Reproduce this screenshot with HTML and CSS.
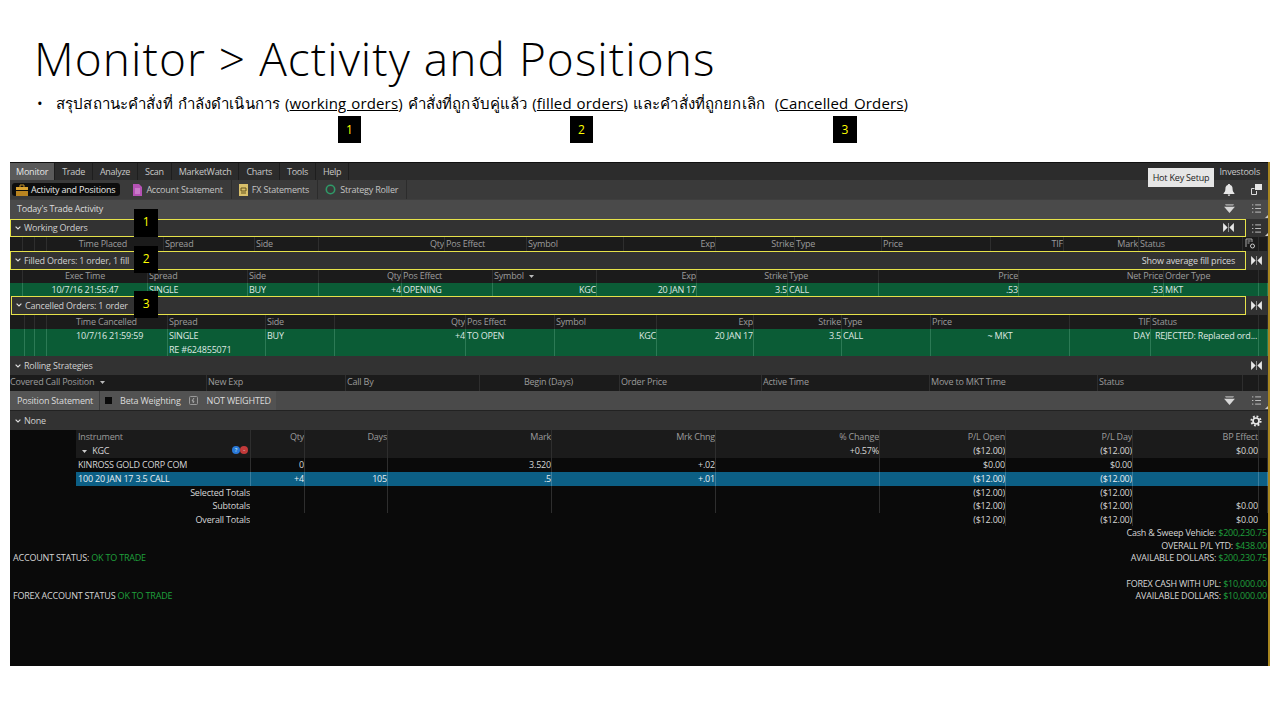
FILE: index.html
```html
<!DOCTYPE html>
<html lang="en">
<head>
    <meta charset="UTF-8">
    <title>Monitor - Activity and Positions</title>
    <link rel="stylesheet" href="styles.css">
</head>
<body>
    <svg class="defs" width="0" height="0">
        <symbol id="i-list" viewBox="0 0 12 10"><path d="M1 1h1.500M4.500 1H11M1 5h1.500M4.500 5H11M1 9h1.500M4.500 9H11" stroke="#bdbdbd" stroke-width="1.100" fill="none"/></symbol>
        <symbol id="i-bow" viewBox="0 0 12 10"><path d="M0 0l5 5-5 5zM12 0L7 5l5 5z" fill="#e8e8e8"/><path d="M6 0v10" stroke="#bbb" stroke-width=".8"/></symbol>
        <symbol id="i-tri" viewBox="0 0 12 10"><path d="M0 3l6 7 6-7z" fill="#d8d8d8"/><path d="M1 0h10l-1 2H2z" fill="#999"/></symbol>
        <symbol id="i-chev" viewBox="0 0 6 4"><path d="M.6.6L3 3l2.400-2.400" stroke="#ddd" stroke-width="1.200" fill="none"/></symbol>
    </svg>

    <header class="slide-head">
        <h1>Monitor &gt; Activity and Positions</h1>
        <p class="summary"><span class="bullet">•</span>สรุปสถานะคำสั่งที่ กำลังดำเนินการ (<u>working orders</u>) คำสั่งที่ถูกจับคู่แล้ว (<u>filled orders</u>) และคำสั่งที่ถูกยกเลิก &nbsp;(<u class="wide-gap">Cancelled Orders</u>)</p>
        <div class="key-row">
            <span class="tag tag-a">1</span>
            <span class="tag tag-b">2</span>
            <span class="tag tag-c">3</span>
        </div>
    </header>

    <main class="app">
        <!-- menu -->
        <nav class="menubar">
            <a class="menu-item active">Monitor</a>
            <a class="menu-item">Trade</a>
            <a class="menu-item">Analyze</a>
            <a class="menu-item">Scan</a>
            <a class="menu-item">MarketWatch</a>
            <a class="menu-item">Charts</a>
            <a class="menu-item">Tools</a>
            <a class="menu-item">Help</a>
            <span class="menu-right">Investools</span>
        </nav>
        <div class="tooltip">Hot Key Setup</div>

        <div class="subtabs">
            <a class="subtab pill">
                <svg class="tab-ico" width="12" height="12" viewBox="0 0 12 12"><path d="M4 3V1h4v2" stroke="#c9962a" fill="none"/><path d="M0 3h12v3H0z" fill="#d9a332"/><path d="M0 7h12v5H0z" fill="#b98420"/></svg>
                Activity and Positions
            </a>
            <a class="subtab">
                <svg class="tab-ico" width="9" height="12" viewBox="0 0 9 12"><path d="M0 0h6l3 3v9H0z" fill="#b552b5"/><path d="M2 5h5M2 7h5M2 9h5" stroke="#e9b7e9" stroke-width=".8"/></svg>
                Account Statement
            </a>
            <a class="subtab">
                <svg class="tab-ico" width="9" height="12" viewBox="0 0 9 12"><path d="M0 0h9v12H0z" fill="#d8bf6a"/><path d="M2 4h5v3H2zM2 9h5" stroke="#5a4a14" stroke-width=".9" fill="none"/></svg>
                FX Statements
            </a>
            <a class="subtab">
                <svg class="tab-ico" width="11" height="11" viewBox="0 0 11 11"><circle cx="5.500" cy="5.500" r="4.200" stroke="#2f9a68" stroke-width="1.600" fill="none"/></svg>
                Strategy Roller
            </a>
            <span class="spacer"></span>
            <span class="slot-wide">
                <svg width="12" height="12" viewBox="0 0 12 12"><path d="M6 0c.8 0 1.200.5 1.200 1.100C9 1.700 9.600 3.200 9.600 5c0 2 .6 3 1.800 4.200V10H.6v-.8C1.800 8 2.400 7 2.400 5c0-1.800.6-3.300 2.400-3.900C4.800.5 5.200 0 6 0zM4.800 10.600h2.400C7.200 11.500 6.700 12 6 12s-1.200-.5-1.200-1.400z" fill="#e6e6e6"/></svg>
            </span>
            <span class="slot">
                <svg width="11" height="11" viewBox="0 0 11 11"><path d="M4 0h7v6H4z" fill="#e6e6e6"/><path d="M.5 10.500v-6h3M.5 10.500h5V7" stroke="#ddd" fill="none"/></svg>
            </span>
        </div>

        <div class="bar-today">
            <span class="today-label">Today's Trade Activity</span>
            <span class="spacer"></span>
            <span class="slot-wide"><svg width="11" height="9"><use href="#i-tri"/></svg></span>
            <span class="slot corner"><svg width="11" height="9"><use href="#i-list"/></svg></span>
        </div>

        <!-- working orders -->
        <section class="sect h18">
            <div class="hl">
                <svg class="chev" width="6" height="4"><use href="#i-chev"/></svg>
                <span>Working Orders</span>
                <span class="spacer"></span>
                <span class="slot-bow"><svg width="11" height="9"><use href="#i-bow"/></svg></span>
            </div>
            <span class="slot corner"><svg width="11" height="9"><use href="#i-list"/></svg></span>
        </section>
        <div class="row head cols-work h14">
            <span></span><span></span><span></span>
            <span class="r pad-time">Time Placed</span>
            <span>Spread</span><span>Side</span>
            <span class="r">Qty</span><span>Pos Effect</span><span>Symbol</span>
            <span class="r">Exp</span><span class="r">Strike</span><span>Type</span>
            <span>Price</span><span class="r">TIF</span><span class="r">Mark</span><span>Status</span>
            <span class="gear-doc"><svg width="11" height="11" viewBox="0 0 11 11"><path d="M1 9V1h6v3M2.500 3h3M2.500 5h2" stroke="#aaa" fill="none"/><circle cx="7.500" cy="8" r="2" stroke="#ccc" fill="none"/></svg></span>
            <span></span>
        </div>

        <!-- filled orders -->
        <section class="sect h19">
            <div class="hl">
                <svg class="chev" width="6" height="4"><use href="#i-chev"/></svg>
                <span>Filled Orders: 1 order, 1 fill</span>
                <span class="spacer"></span>
                <span class="fill-link">Show average fill prices</span>
            </div>
            <span class="slot"><svg width="11" height="9"><use href="#i-bow"/></svg></span>
        </section>
        <div class="row head cols-fill h13 tight">
            <span></span>
            <span class="c">Exec Time</span>
            <span>Spread</span><span>Side</span>
            <span class="r">Qty</span><span>Pos Effect</span><span>Symbol <svg class="sort" width="5" height="3" viewBox="0 0 5 3"><path d="M0 0h5L2.500 3z" fill="#bbb"/></svg></span>
            <span class="r">Exp</span><span class="r">Strike</span><span>Type</span>
            <span class="r">Price</span><span class="r">Net Price</span><span>Order Type</span><span></span>
        </div>
        <div class="row green cols-fill h13">
            <span></span>
            <span class="c">10/7/16 21:55:47</span>
            <span>SINGLE</span><span>BUY</span>
            <span class="r">+4</span><span>OPENING</span><span class="r">KGC</span>
            <span class="r">20 JAN 17</span><span class="r">3.5</span><span>CALL</span>
            <span class="r">.53</span><span class="r">.53</span><span>MKT</span><span></span>
        </div>

        <!-- cancelled orders -->
        <section class="sect h19">
            <div class="hl hl-shift">
                <svg class="chev" width="6" height="4"><use href="#i-chev"/></svg>
                <span>Cancelled Orders: 1 order</span>
            </div>
            <span class="slot"><svg width="11" height="9"><use href="#i-bow"/></svg></span>
        </section>
        <div class="row head cols-canc h14">
            <span></span><span></span><span></span>
            <span class="pad-canc">Time Cancelled</span>
            <span>Spread</span><span>Side</span>
            <span class="r">Qty</span><span>Pos Effect</span><span>Symbol</span>
            <span class="r">Exp</span><span class="r">Strike</span><span>Type</span>
            <span>Price</span><span class="r">TIF</span><span>Status</span><span></span>
        </div>
        <div class="row green cols-canc h27 two-line">
            <span></span><span></span><span></span>
            <span class="pad-canc">10/7/16 21:59:59</span>
            <span>SINGLE<br>RE #624855071</span><span>BUY</span>
            <span class="r">+4</span><span>TO OPEN</span><span class="r">KGC</span>
            <span class="r">20 JAN 17</span><span class="r">3.5</span><span>CALL</span>
            <span class="c">~ MKT</span><span class="r">DAY</span><span class="status">REJECTED: Replaced ord...</span><span></span>
        </div>

        <!-- rolling strategies -->
        <section class="sect plain h19">
            <svg class="chev" width="6" height="4"><use href="#i-chev"/></svg>
            <span>Rolling Strategies</span>
            <span class="spacer"></span>
            <span class="slot"><svg width="11" height="9"><use href="#i-bow"/></svg></span>
        </section>
        <div class="row head cols-roll h16">
            <span class="flush">Covered Call Position <svg class="sort" width="5" height="3" viewBox="0 0 5 3"><path d="M0 0h5L2.500 3z" fill="#bbb"/></svg></span>
            <span>New Exp</span><span>Call By</span>
            <span class="r pad-begin">Begin (Days)</span>
            <span>Order Price</span><span>Active Time</span><span>Move to MKT Time</span><span>Status</span>
            <span></span><span></span>
        </div>

        <!-- position statement -->
        <div class="bar-pos">
            <span class="pos-tab">Position Statement</span>
            <span class="pos-beta">
                <i class="swatch"></i>
                Beta Weighting
                <svg width="9" height="9" viewBox="0 0 9 9"><rect x=".5" y=".5" width="8" height="8" rx="1" stroke="#999" fill="none"/><path d="M5 2L3 5h2L4 7" stroke="#aaa" fill="none"/></svg>
                <span class="nw">NOT WEIGHTED</span>
            </span>
            <span class="spacer"></span>
            <span class="slot-wide"><svg width="11" height="9"><use href="#i-tri"/></svg></span>
            <span class="slot corner"><svg width="11" height="9"><use href="#i-list"/></svg></span>
        </div>
        <section class="sect plain h19">
            <svg class="chev" width="6" height="4"><use href="#i-chev"/></svg>
            <span>None</span>
            <span class="spacer"></span>
            <span class="slot">
                <svg width="12" height="12" viewBox="0 0 12 12"><circle cx="6" cy="6" r="4.600" stroke="#e8e8e8" stroke-width="2" stroke-dasharray="1.800 1.810" fill="none"/><circle cx="6" cy="6" r="3" stroke="#e8e8e8" stroke-width="1.700" fill="none"/></svg>
            </span>
        </section>

        <div class="row head cols-pos h14 blank-first">
            <span></span>
            <span>Instrument</span>
            <span class="r">Qty</span><span class="r">Days</span><span class="r">Mark</span><span class="r">Mrk Chng</span>
            <span class="r">% Change</span><span class="r">P/L Open</span><span class="r">P/L Day</span><span class="r">BP Effect</span><span></span>
        </div>
        <div class="row dark cols-pos h14 blank-first">
            <span></span>
            <span class="kgc"><svg class="sort" width="5" height="3" viewBox="0 0 5 3"><path d="M0 0h5L2.500 3z" fill="#ccc"/></svg> KGC
                <span class="badges"><i class="dot blue">?</i><i class="dot red">-</i></span>
            </span>
            <span></span><span></span><span></span><span></span>
            <span class="r">+0.57%</span><span class="r">($12.00)</span><span class="r">($12.00)</span><span class="r">$0.00</span><span></span>
        </div>
        <div class="row black cols-pos h14 blank-first">
            <span></span>
            <span>KINROSS GOLD CORP COM</span>
            <span class="r">0</span><span></span><span class="r">3.520</span><span class="r">+.02</span>
            <span></span><span class="r">$0.00</span><span class="r">$0.00</span><span></span><span></span>
        </div>
        <div class="row selected cols-pos h14 blank-first">
            <span></span>
            <span>100 20 JAN 17 3.5 CALL</span>
            <span class="r">+4</span><span class="r">105</span><span class="r">.5</span><span class="r">+.01</span>
            <span></span><span class="r">($12.00)</span><span class="r">($12.00)</span><span></span><span></span>
        </div>
        <div class="row black cols-pos h13 blank-first">
            <span></span>
            <span class="r tot">Selected Totals</span>
            <span></span><span></span><span></span><span></span><span></span>
            <span class="r">($12.00)</span><span class="r">($12.00)</span><span></span><span></span>
        </div>
        <div class="row black cols-pos h14 blank-first">
            <span></span>
            <span class="r tot">Subtotals</span>
            <span></span><span></span><span></span><span></span><span></span>
            <span class="r">($12.00)</span><span class="r">($12.00)</span><span class="r">$0.00</span><span></span>
        </div>
        <div class="row black no-lines cols-pos h13 blank-first">
            <span></span>
            <span class="r tot">Overall Totals</span>
            <span></span><span></span><span></span><span></span><span></span>
            <span class="r line">($12.00)</span><span class="r line">($12.00)</span><span class="r">$0.00</span><span></span>
        </div>

        <!-- account footer -->
        <footer class="account">
            <div class="acct-left">
                <p></p><p></p>
                <p>ACCOUNT STATUS: <b>OK TO TRADE</b></p>
                <p></p><p></p>
                <p>FOREX ACCOUNT STATUS <b>OK TO TRADE</b></p>
            </div>
            <div class="acct-right">
                <p>Cash &amp; Sweep Vehicle: <b>$200,230.75</b></p>
                <p>OVERALL P/L YTD: <b>$438.00</b></p>
                <p>AVAILABLE DOLLARS: <b>$200,230.75</b></p>
                <p></p>
                <p>FOREX CASH WITH UPL: <b>$10,000.00</b></p>
                <p>AVAILABLE DOLLARS: <b>$10,000.00</b></p>
            </div>
        </footer>

        <!-- numbered tags sit over the section bars -->
        <span class="tag over over-1">1</span>
        <span class="tag over over-2">2</span>
        <span class="tag over over-3">3</span>
    </main>
</body>
</html>
```

FILE: styles.css
```css
/* Slide */
body {
    margin: 0;
    background: #fff;
    color: #000;
    font-family: "Open Sans", sans-serif;
}

.defs {
    position: absolute;
}

.slide-head {
    height: 162px;
    box-sizing: border-box;
    padding: 29px 0 0 34px;
}

h1 {
    margin: 0;
    height: 59px;
    font-size: 46px;
    line-height: 59px;
    font-weight: 300;
    letter-spacing: 1.05px;
    white-space: nowrap;
}

.summary {
    margin: 4px 0 0;
    height: 22px;
    font-size: 15px;
    line-height: 22px;
    letter-spacing: .15px;
    word-spacing: .8px;
    white-space: nowrap;
}

.wide-gap {
    word-spacing: 1.5px;
}

.bullet {
    display: inline-block;
    width: 22px;
    padding-left: 3px;
    box-sizing: border-box;
}

.key-row {
    display: flex;
    padding: 2px 0 0 304px;
}

.tag {
    display: flex;
    align-items: center;
    justify-content: center;
    width: 24px;
    height: 27px;
    background: #000;
    color: #ff0;
    font-size: 12px;
}

.tag-a, .tag-b {
    width: 23px;
}

.tag-b {
    margin-left: 209px;
}

.tag-c {
    margin-left: 240px;
}

/* App window */
.app {
    position: relative;
    width: 1260px;
    height: 504px;
    margin-left: 10px;
    box-sizing: border-box;
    border-right: 2px solid #a8861f;
    background: #0a0a0a;
    color: #d6d6d6;
    font-size: 9px;
    letter-spacing: -.2px;
    overflow: hidden;
}

.spacer {
    flex: 1;
}

.menubar {
    display: flex;
    height: 18px;
    box-sizing: border-box;
    border-top: 1px solid #111;
    background: #2c2c2c;
    line-height: 17px;
    color: #c8c8c8;
}

.menu-item {
    padding: 0 7px;
    border-right: 1px solid #1e1e1e;
    letter-spacing: -.3px;
}

.menu-item.active {
    background: #5a5a5a;
    color: #e6e6e6;
    padding: 0 6px;
    letter-spacing: -.2px;
}

.menu-right {
    margin-left: auto;
    padding-right: 8px;
}

.tooltip {
    position: absolute;
    left: 1138px;
    top: 6px;
    width: 66px;
    height: 19px;
    background: #e6e6e6;
    color: #222;
    line-height: 19px;
    text-align: center;
}

.subtabs {
    display: flex;
    align-items: center;
    height: 19px;
    background: #3a3a3a;
    padding-left: 2px;
    color: #c4c4c4;
}

.subtab {
    display: flex;
    align-items: center;
    gap: 4px;
    height: 19px;
    padding: 0 8px 0 0;
    margin-right: 7px;
    border-right: 1px solid #2c2c2c;
}

.subtab.pill {
    gap: 3px;
    height: 13px;
    padding: 0 5px 0 4px;
    margin-right: 13px;
    background: #0d0d0d;
    border: 0;
    border-radius: 3px;
    color: #e8e8e8;
}

.slot, .slot-wide, .slot-bow {
    display: flex;
    align-items: center;
    justify-content: center;
    height: 100%;
    box-sizing: border-box;
}

.slot {
    position: relative;
    width: 22px;
    padding-right: 2px;
    flex: none;
}

.slot-wide {
    width: 34px;
    flex: none;
}

.slot-bow {
    width: 34px;
    flex: none;
}

/* little resize corner */
.corner::after {
    content: "";
    position: absolute;
    right: 0;
    bottom: 1px;
    border-left: 3px solid transparent;
    border-bottom: 3px solid #ccc;
}

.bar-today {
    display: flex;
    align-items: center;
    height: 20px;
    background: #4a4a4a;
    border-top: 1px solid #3e3e3e;
    box-sizing: border-box;
    padding: 0 0 3px 7px;
    color: #dcdcdc;
}

.bar-today .corner::after {
    bottom: -2px;
}

/* Section bars */
.sect {
    display: flex;
    align-items: center;
    background: #323232;
    color: #d0d0d0;
}

.sect.plain {
    padding-left: 5px;
}

.hl {
    flex: 1;
    display: flex;
    align-items: center;
    align-self: stretch;
    min-width: 0;
    padding: 0 0 1px 4px;
    border: 1px solid #e6e24a;
    box-sizing: border-box;
}

.hl-shift {
    margin-left: 1px;
}

.chev {
    margin-right: 3px;
}

.fill-link {
    padding-right: 10px;
    color: #d8d8d8;
}

/* Tables */
.h13 { height: 13px; }
.h14 { height: 14px; }
.h16 { height: 16px; }
.h18 { height: 18px; }
.h19 { height: 19px; }
.h27 { height: 27px; }

.row {
    display: grid;
    line-height: 13px;
    white-space: nowrap;
}

.row > span {
    padding: 0 1px;
    border-right: 1px solid #2e2e2e;
    overflow: hidden;
    min-width: 0;
}

.row > .r {
    padding: 0 0 0 1px;
    text-align: right;
}

.c { text-align: center; }

.head {
    background: #1b1b1b;
    color: #9c9c9c;
}

.green {
    background: #0b5c36;
    color: #dfe8e2;
}

.green > span {
    border-right-color: #2c7a55;
}

.dark {
    background: #1b1b1b;
}

.black {
    background: #0a0a0a;
}

.selected {
    background: #0c5f85;
    color: #e6eef2;
}

.selected > span {
    border-right-color: #3b7f9f;
}

.row > .tot {
    border-right-color: transparent;
}

.no-lines > span {
    border-right-color: transparent;
}

.no-lines > .line {
    border-right-color: #2e2e2e;
}

.blank-first > span:first-child {
    background: #0a0a0a;
    border-right: 0;
}

.cols-work {
    grid-template-columns: 13px 12px 12px 117px 91px 64px 126px 82px 97px 92px 79px 87px 109px 73px 75px 104px 16px 9px;
}

.cols-fill {
    grid-template-columns: 13px 125px 100px 71px 83px 91px 104px 100px 91px 91px 140px 145px 95px 9px;
}

.cols-canc {
    grid-template-columns: 15px 10px 12px 121px 98px 69px 131px 89px 102px 97px 88px 89px 139px 81px 108px 9px;
}

.cols-roll {
    grid-template-columns: 197px 139px 134px 140px 142px 168px 168px 145px 16px 9px;
}

.cols-pos {
    grid-template-columns: 66px 175px 54px 83px 164px 164px 164px 126px 127px 126px 9px;
}

.cols-pos > span {
    padding-left: 2px;
}

.row.tight > span {
    line-height: 11px;
}

.row > .pad-time { padding-right: 36px; }
.row > .pad-canc { padding-left: 29px; }
.row > .pad-begin { padding-right: 46px; }
.row > .flush { padding-left: 0; }
.row > .status { padding-left: 4px; }

.row.two-line > span {
    line-height: 14px;
}

.row.h16 > span {
    line-height: 14px;
}

.row > .gear-doc {
    padding: 1px 0 0 2px;
    line-height: 0;
    overflow: visible;
}

.sort {
    vertical-align: middle;
    margin-left: 3px;
}

.row > .kgc {
    position: relative;
    padding-left: 3px;
}

.kgc .sort {
    margin-right: 3px;
}

.badges {
    position: absolute;
    right: 2px;
    top: 2px;
    display: flex;
}

.dot {
    width: 8px;
    height: 8px;
    border-radius: 50%;
    font-size: 6px;
    line-height: 8px;
    text-align: center;
    font-style: normal;
    color: #dfe;
}

.dot.blue { background: #2a78d8; }
.dot.red { background: #c23a3a; }

.bar-pos {
    display: flex;
    align-items: center;
    height: 20px;
    background: #4a4a4a;
    border-bottom: 1px solid #222;
    box-sizing: border-box;
    color: #dcdcdc;
}

.pos-tab {
    padding: 0 6px 0 7px;
    line-height: 19px;
    background: #555;
    border-right: 1px solid #3c3c3c;
}

.pos-beta {
    display: flex;
    align-items: center;
    gap: 8px;
    height: 19px;
    padding: 0 5px;
    background: #525252;
}

.swatch {
    width: 7px;
    height: 7px;
    background: #0a0a0a;
}

.nw {
    margin-left: 1px;
}

/* Footer */
.account {
    display: flex;
    justify-content: space-between;
    padding: 1px 1px 0 3px;
    line-height: 12.7px;
}

.account p {
    margin: 0;
    height: 12.7px;
}

.acct-right {
    text-align: right;
}

.account b {
    font-weight: 400;
    color: #1fa03c;
}

/* Tags over the bars */
.over {
    position: absolute;
    left: 124px;
    padding-bottom: 3px;
    box-sizing: border-box;
}

.over-1 { top: 47px; height: 28px; }
.over-2 { top: 84px; }
.over-3 { top: 129px; }
```
